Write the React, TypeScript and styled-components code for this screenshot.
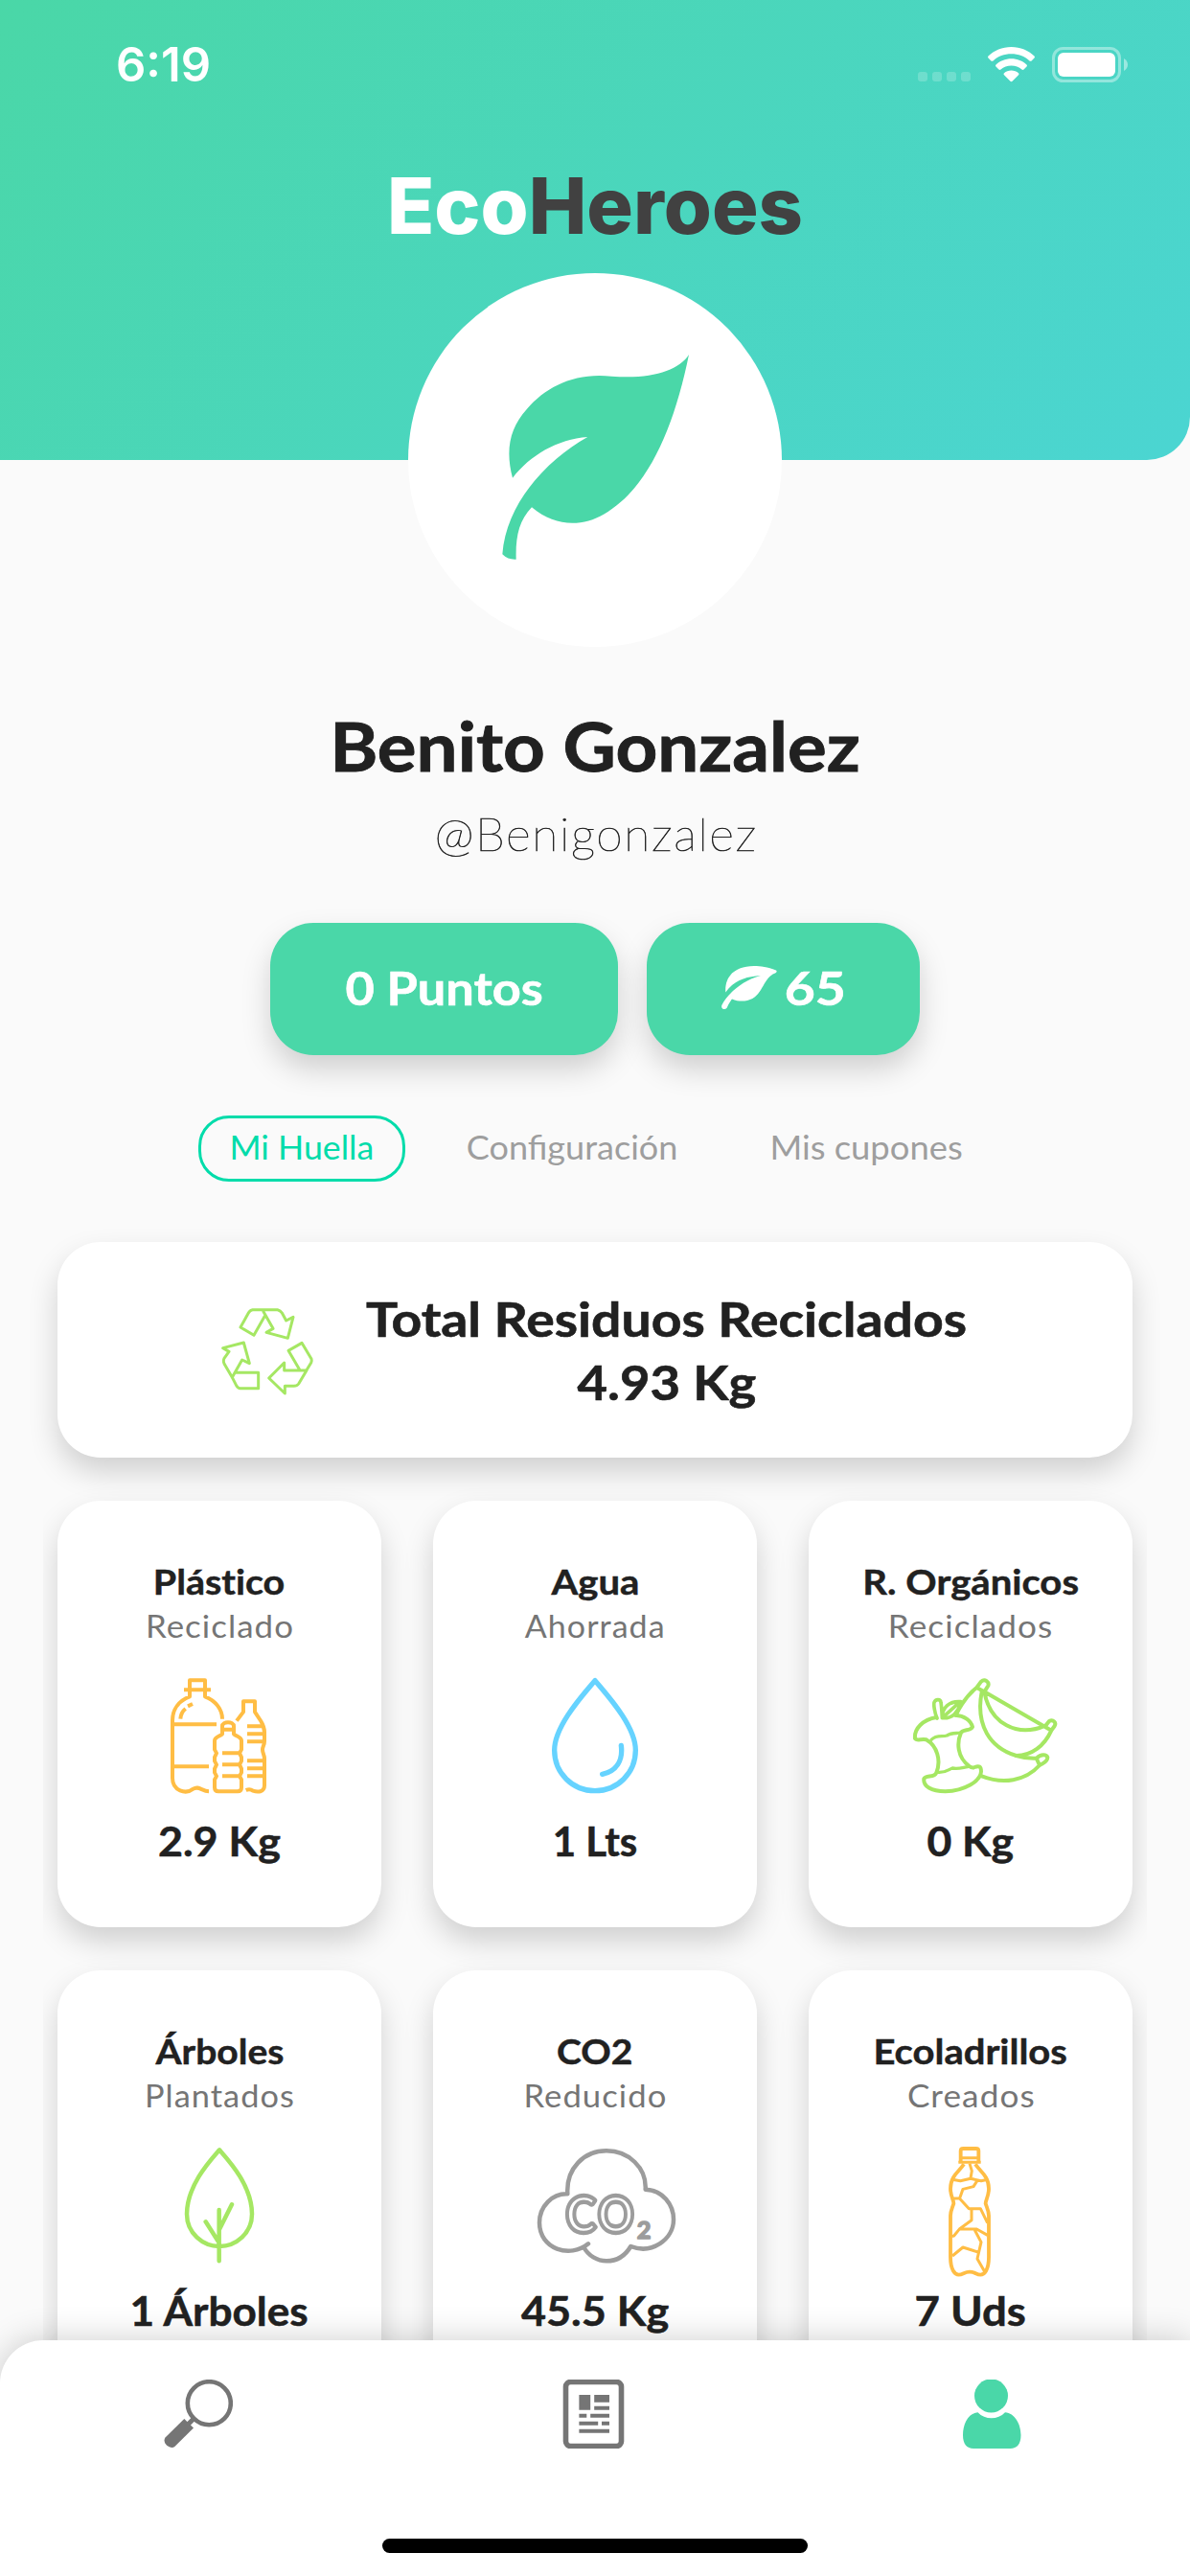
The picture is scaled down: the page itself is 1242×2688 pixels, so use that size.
import React from 'react';
import styled, { createGlobalStyle } from 'styled-components';

const GlobalStyle = createGlobalStyle`
  *, *::before, *::after { box-sizing: border-box; }
  body { margin: 0; background: #fafafa; }
`;

const color = {
  green: '#4ad7a8',
  accent: '#00dcaa',
  ink: '#212121',
  muted: '#757575',
  idle: '#9e9e9e',
  lime: '#a5e763',
  amber: '#ffbd44',
  sky: '#66d3ff',
  cloud: '#9c9c9c',
};

const Screen = styled.div`
  position: relative;
  display: flex;
  flex-direction: column;
  width: 1242px;
  height: 2688px;
  overflow: hidden;
  background: #fafafa;
  font-family: Lato, 'Liberation Sans', sans-serif;
  font-variant-ligatures: none;
  color: ${color.ink};
`;

/* $stretch widens the glyphs around the label's centre, $track spaces them. */
const Label = styled.span<{
  $size: number;
  $line: number;
  $stretch?: number;
  $track?: number;
  $weight?: number;
  $color?: string;
}>`
  display: block;
  white-space: nowrap;
  font-size: ${(p) => p.$size}px;
  line-height: ${(p) => p.$line}px;
  letter-spacing: ${(p) => p.$track ?? 0}px;
  margin-right: ${(p) => -(p.$track ?? 0)}px;
  font-weight: ${(p) => p.$weight ?? 700};
  color: ${(p) => p.$color ?? 'inherit'};
  transform: scaleX(${(p) => p.$stretch ?? 1});
  -webkit-text-stroke: ${(p) => (p.$weight ? 0 : 0.012)}em currentColor;
`;

/* Header */

const Header = styled.header`
  flex: none;
  height: 480px;
  padding-top: 38px;
  border-bottom-right-radius: 45px;
  background: linear-gradient(135deg, #4ad7a7 0%, #4bd5d2 100%);
`;

const StatusBar = styled.div`
  display: flex;
  justify-content: space-between;
  align-items: center;
  height: 60px;
  padding: 0 65px 0 121px;
  color: #fff;
`;

const Clock = styled.span`
  font: 600 49px/60px Inter, sans-serif;
`;

const StatusIcons = styled.div`
  display: flex;
  gap: 18px;
  height: 37px;
  margin-top: -2px;

  svg {
    display: block;
  }
`;

const SignalDots = styled.div`
  display: flex;
  gap: 5px;
  align-self: flex-end;
  margin-bottom: 1px;

  i {
    width: 10px;
    height: 10px;
    border-radius: 3px;
    background: rgba(255, 255, 255, 0.2);
  }
`;

const Logo = styled.h1`
  margin: 68px 0 0;
  text-align: center;
  font: 800 81px/98px Inter, sans-serif;
  color: #414141;

  span {
    color: #fff;
  }
`;

/* Profile */

const Profile = styled.section`
  flex: none;
  display: flex;
  flex-direction: column;
  align-items: center;
  margin-top: -195px;
`;

const Avatar = styled.div`
  display: grid;
  place-items: center;
  width: 390px;
  height: 390px;
  padding-bottom: 6px;
  border-radius: 50%;
  background: #fff;
`;

const Name = styled.div`
  margin-top: 61px;
`;

const Handle = styled.div`
  margin-top: 22px;

  span {
    -webkit-text-stroke: 0.6px ${color.ink};
  }
`;

const Badges = styled.div`
  display: flex;
  gap: 30px;
  margin-top: 65px;
`;

const Badge = styled.button<{ $width: number }>`
  display: flex;
  align-items: center;
  justify-content: center;
  gap: 12px;
  width: ${(p) => p.$width}px;
  height: 138px;
  padding: 0 0 3px;
  border: 0;
  border-radius: 45px;
  background: ${color.green};
  color: #fff;
  font-family: inherit;
  box-shadow: 0 15px 30px rgba(0, 0, 0, 0.17);

  svg {
    margin-left: -4px;
  }
`;

const Tabs = styled.nav`
  display: flex;
  gap: 32px;
  margin-top: 63px;
`;

const Tab = styled.button<{ $width: number; $active?: boolean }>`
  display: flex;
  align-items: center;
  justify-content: center;
  width: ${(p) => p.$width}px;
  height: 69px;
  padding: 0 0 4px;
  border: 3px solid ${(p) => (p.$active ? color.accent : 'transparent')};
  border-radius: 32px;
  background: none;
  color: ${(p) => (p.$active ? color.accent : color.idle)};
  font-family: inherit;
`;

/* Cards */

const Cards = styled.main`
  flex: none;
  display: flex;
  flex-direction: column;
  gap: 45px;
  padding: 63px 45px 0;
`;

const Surface = styled.section`
  border-radius: 45px;
  background: #fff;
  box-shadow: 0 15px 30px rgba(0, 0, 0, 0.17);
`;

const TotalCard = styled(Surface)`
  display: flex;
  align-items: center;
  justify-content: center;
  gap: 72px;
  height: 225px;
  margin: 0 15px;
  padding-right: 43px;

  svg {
    margin-top: 3px;
  }
`;

const TotalText = styled.div`
  display: flex;
  flex-direction: column;
  align-items: center;
`;

const StatGrid = styled.div`
  display: grid;
  grid-template-columns: repeat(3, 338px);
  gap: 45px 54px;
  padding: 0 15px;
  overflow-x: clip;
`;

const StatCard = styled(Surface)`
  display: flex;
  flex-direction: column;
  align-items: center;
  height: 445px;
  padding-top: 61px;
`;

const StatIcon = styled.svg`
  display: block;
  flex: none;
  width: 338px;
  height: 120px;
  margin: 32px 0 25px;
  overflow: visible;
  fill: none;
  stroke-linejoin: round;
`;

/* Bottom bar */

const BottomBar = styled.footer`
  position: absolute;
  inset: auto 0 0 0;
  display: flex;
  flex-direction: column;
  justify-content: space-between;
  align-items: center;
  height: 246px;
  padding: 41px 0 24px;
  border-top-left-radius: 45px;
  background: #fff;
  box-shadow: 0 0 36px rgba(0, 0, 0, 0.2);
`;

const BottomItems = styled.div`
  display: grid;
  grid-template-columns: repeat(3, 1fr);
  justify-items: center;
  width: 100%;
`;

const HomeIndicator = styled.div`
  width: 444px;
  height: 15px;
  border-radius: 8px;
  background: #000;
`;

/* Drawings */

const WifiIcon = () => (
  <svg width="49" height="37" viewBox="0 0 49 37" fill="#fff">
    <path d="M24.5 0C34 0 42.500 3.600 48.500 9.500c.6.600.6 1.400 0 2L45.600 14.400c-.6.600-1.500.600-2.100 0C38.500 9.700 31.800 7.200 24.500 7.200S10.500 9.700 5.500 14.400c-.6.600-1.500.600-2.100 0L.5 11.500c-.6-.6-.6-1.400 0-2C6.500 3.600 15 0 24.500 0Z" />
    <path d="M24.500 12.300c6.200 0 11.800 2.300 16 6.200.6.600.6 1.400 0 2l-3 3c-.6.600-1.400.600-2 0-3-2.600-6.800-4.100-11-4.100s-8 1.500-11 4.100c-.6.600-1.400.600-2 0l-3-3c-.6-.6-.6-1.400 0-2 4.200-3.900 9.800-6.200 16-6.200Z" />
    <path d="M24.500 24.500c2.900 0 5.500 1 7.500 2.700.6.600.6 1.400 0 2l-6.500 6.500c-.6.600-1.400.600-2 0L17 29.200c-.6-.6-.6-1.400 0-2 2-1.700 4.600-2.700 7.500-2.700Z" />
  </svg>
);

const BatteryIcon = () => (
  <svg width="79" height="37" viewBox="0 0 79 37" fill="#fff">
    <rect x="1.500" y="1.500" width="69" height="34" rx="10" fill="none" stroke="#fff" strokeOpacity=".4" strokeWidth="3" />
    <rect x="6" y="6" width="60" height="25" rx="6" />
    <path d="M75 12c2.500 1.200 4 3.700 4 6.500s-1.500 5.300-4 6.500Z" fillOpacity=".45" />
  </svg>
);

const LeafMark = () => (
  <svg width="195" height="214" viewBox="372 300 585 642" fill={color.green}>
    <path d="M957 300C925 350 840 378 715 368C600 355 510 400 450 470C395 530 382 600 405 686C460 615 545 565 640 558C520 625 385 760 373 925C385 938 400 942 416 941C414 870 425 820 465 778C540 842 625 838 690 800C830 720 910 530 957 300Z" />
  </svg>
);

const BadgeLeaf = () => (
  <svg width="58" height="46" viewBox="0 0 58 46" fill="#fff">
    <path d="M57 4.500C48 1 41 0 34 0C15 0 3 10 4.300 27.500C12 16 24 11 41 10C21 15 6 30 .3 41C-1 45.500 4.500 46.500 6 43C7.500 39.500 9 37 11 34.500C17 37 22 37 27 36C44 32 42 13 56 7.500C58 6.500 58 5 57 4.500Z" />
  </svg>
);

const RecycleIcon = () => (
  <svg width="120" height="120" viewBox="0 0 360 360" fill="none" stroke={color.lime} strokeWidth="9" strokeLinejoin="round" strokeLinecap="round">
    <path d="M131 50H209Q218 52 223 60L236 84L258 73L241 139L174 121L195 109L165 56M131 50Q123 51 118 60L93 105L135 130L169 70" />
    <path d="M67 262L42 219Q38 210 42 202L57 181L38 170L103 153L121 218L98 207L67 262M79 247H149V296H92Q85 296 81 289L66 260" />
    <path d="M182 264L230 216V240H300L275 282Q270 289 260 289H232V312ZM278 238L243 178L285 154L315 204Q317 210 314 216L298 242" />
  </svg>
);

const BottlesIcon = () => (
  <StatIcon viewBox="60 632 1014 360" stroke={color.amber} strokeWidth="12">
    <path d="M576 760C576 730 555 703 522 690V638.500H474V690C440 703 420 730 420 765V945C420 986 462 997 485 979C502 968 512 986 534 987" />
    <path d="M456 669H540M420 777H558M420 909H534M445 760C446 745 452 735 461 728M468 720L483 713" />
    <path d="M576 807V783C576 767 612 767 612 783V807C618 814 636 816 636 828V856L630 867L636 880V892L630 903L636 916V928L630 939L636 950V975C636 983 632 987 624 987H564C556 987 552 983 552 975V950L558 939L552 928V916L558 903L552 892V880L558 867L552 856V828C552 816 570 814 576 807ZM580 793H608" />
    <path d="M576 867H634M576 903H634M576 939H634" />
    <path d="M621 766L642 738V705H678V738L697 767C705 780 708 788 708 802V830C708 842 702 846 702 856C702 868 708 872 708 885V968C708 990 686 990 672 985C662 977 655 981 650 983" />
    <path d="M654 783H706M654 807H708M654 831H706M654 891H708M654 915H708M654 939H708" />
  </StatIcon>
);

const DropIcon = () => (
  <StatIcon viewBox="66 632 1014 360" stroke={color.sky} strokeWidth="16" strokeLinecap="round">
    <path d="M573 640C540 680 446 780 446 858C446 930 503 985 573 985C643 985 700 930 700 858C700 780 606 680 573 640ZM655 843C661 890 640 923 596 933" />
  </StatIcon>
);

const OrganicIcon = () => (
  <StatIcon viewBox="72 632 1014 360" stroke={color.lime} strokeWidth="12" strokeLinecap="round">
    <path d="M472 755C430 762 402 790 405 821C410 830 424 822 440 825C475 845 487 890 472 928C465 945 440 935 433 947C430 970 455 987 500 987C560 985 610 955 612 925C612 908 605 906 592 911C585 914 580 912 575 908C537 880 535 835 549 803C555 792 580 798 585 785C580 765 560 750 530 748" />
    <path d="M456 825C473 808 490 817 505 812C520 802 535 806 548 803M475 927C500 930 510 918 522 914C540 918 555 912 570 910" strokeWidth="10" />
    <path d="M474 758C466 740 463 715 465 708C470 696 485 698 486 708C488 720 489 735 490 757C490 722 515 703 548 706C542 740 520 760 490 757L540 712" strokeWidth="11" />
    <path d="M598 662L612 643C624 632 638 645 634 656L622 675ZM598 662C575 680 555 702 533 748" />
    <path d="M622 675C640 775 725 820 815 780L825 767C838 760 848 772 842 782L832 796ZM832 796C810 845 770 875 722 875" />
    <path d="M614 675C594 780 640 850 722 875C745 882 765 884 785 883C800 869 816 870 820 880C820 896 805 898 795 905L785 883M795 905C750 955 680 965 614 939" />
  </StatIcon>
);

const TreeIcon = () => (
  <StatIcon viewBox="60 602 1014 360" stroke={color.lime} strokeWidth="13.500" strokeLinecap="round">
    <path d="M567 609C540 640 465 720 465 810C465 870 515 911 567 911C619 911 669 870 669 810C669 720 594 640 567 609ZM566 797V957M606 780L567 858M524 834L565 898" />
  </StatIcon>
);

const CloudIcon = () => (
  <StatIcon viewBox="66 602 1014 360" stroke={color.cloud} strokeWidth="13.500" strokeLinecap="round">
    <path d="M552 903C495 950 399 920 399 837C399 785 440 745 487 747C482 665 540 612 609 612C678 612 735 665 731 733C785 735 819 780 819 827C819 890 750 937 685 911C668 940 640 957 609 957C580 957 552 940 538 914" />
    <g fontFamily="Lato, sans-serif" fontWeight="900">
      <text x="481" y="868" fontSize="158" strokeWidth="13" textLength="96" lengthAdjust="spacingAndGlyphs">C</text>
      <text x="581" y="868" fontSize="158" strokeWidth="13" textLength="114" lengthAdjust="spacingAndGlyphs">O</text>
      <text x="704" y="887" fontSize="76" fontWeight="700" strokeWidth="5" fill={color.cloud}>2</text>
    </g>
  </StatIcon>
);

const EcobrickIcon = () => (
  <StatIcon viewBox="72 602 1014 360" stroke={color.amber} strokeWidth="11.500">
    <path d="M548 648V612C548 607 550 605 556 605H596C602 605 604 607 604 612V648" />
    <path d="M541 648H611M548 634H604" strokeWidth="9" />
    <path d="M558 654C545 675 516 690 516 730C516 755 526 765 526 777C522 790 516 800 516 815V945C516 985 530 1000 542 1000C555 1000 560 991 576 991C592 991 597 1000 610 1000C622 1000 636 985 636 945V815C636 800 630 790 626 777C626 765 636 755 636 730C636 690 607 675 594 654" />
    <path
      strokeWidth="9"
      d="M576 652L583 675L579 698M522 702L547 706L579 699L612 706L632 702M600 705L588 724L555 732L545 760L522 762M545 762L574 793H610L632 838M582 793V829L545 856L527 878L520 880M545 857H598L632 876M592 860L612 898L600 950L624 992M522 941L555 914L602 929"
    />
  </StatIcon>
);

const SearchIcon = () => (
  <svg width="72" height="72" viewBox="0 0 72 72">
    <circle cx="47.300" cy="24.700" r="22.500" fill="none" stroke={color.muted} strokeWidth="4.600" />
    <path d="M24 48L32 40" stroke={color.muted} strokeWidth="5" />
    <path d="M21.300 41L31 50.500L11.300 70C7 73.500 -2.500 66.500 1.500 60.500Z" fill={color.muted} />
  </svg>
);

const NewsIcon = () => (
  <svg width="72" height="72" viewBox="0 0 72 72" fill={color.muted}>
    <rect x="5.500" y="2.500" width="58" height="67" rx="5" fill="none" stroke={color.muted} strokeWidth="5.600" />
    <path d="M19.400 16H31.200V31.700H19.400ZM35.200 16H51V23.800H35.200ZM35.200 27.700H51V31.700H35.200ZM19.400 35.700H27.300V39.700H19.400ZM31.200 35.700H51V39.700H31.200ZM19.400 43.700H39.200V47.700H19.400ZM43 43.700H51V47.700H43ZM19.400 51.700H51V55.700H19.400Z" />
  </svg>
);

const PersonIcon = () => (
  <svg width="72" height="72" viewBox="0 0 72 72" fill={color.green}>
    <circle cx="35.500" cy="17" r="17.500" />
    <path d="M21.500 34.200C29 42.300 42.500 42.300 50 34.200C60 35 66.500 46 66.500 58C66.500 67 62.500 72 55.500 72H17C10 72 6 67 6 58C6 46 11.500 35 21.500 34.200Z" />
  </svg>
);

/* Data */

type Text = [value: string, stretch: number];

const stats: { title: Text; note: Text; value: Text; Icon: React.FC }[] = [
  { title: ['Plástico', 1.065], note: ['Reciclado', 1.056], value: ['2.9 Kg', 1.067], Icon: BottlesIcon },
  { title: ['Agua', 1.083], note: ['Ahorrada', 1.03], value: ['1 Lts', 1], Icon: DropIcon },
  { title: ['R. Orgánicos', 1.083], note: ['Reciclados', 1.064], value: ['0 Kg', 1.06], Icon: OrganicIcon },
  { title: ['Árboles', 1.055], note: ['Plantados', 1.04], value: ['1 Árboles', 1.05], Icon: TreeIcon },
  { title: ['CO2', 1.055], note: ['Reducido', 1.05], value: ['45.5 Kg', 1.07], Icon: CloudIcon },
  { title: ['Ecoladrillos', 1.081], note: ['Creados', 1.065], value: ['7 Uds', 1.085], Icon: EcobrickIcon },
];

const tabs = [
  { text: 'Mi Huella', stretch: 1.05, width: 216 },
  { text: 'Configuración', stretch: 1.06, width: 286 },
  { text: 'Mis cupones', stretch: 1.07, width: 263 },
];

export default function App() {
  return (
    <Screen>
      <GlobalStyle />
      <Header>
        <StatusBar>
          <Clock>6:19</Clock>
          <StatusIcons>
            <SignalDots>
              <i />
              <i />
              <i />
              <i />
            </SignalDots>
            <WifiIcon />
            <BatteryIcon />
          </StatusIcons>
        </StatusBar>
        <Logo>
          <span>Eco</span>Heroes
        </Logo>
      </Header>

      <Profile>
        <Avatar>
          <LeafMark />
        </Avatar>
        <Name>
          <Label $size={70} $line={84} $stretch={1.09}>Benito Gonzalez</Label>
        </Name>
        <Handle>
          <Label $size={47} $line={56} $stretch={1.06} $track={1.5} $weight={100}>@Benigonzalez</Label>
        </Handle>
        <Badges>
          <Badge $width={363}>
            <Label $size={48} $line={58} $stretch={1.09}>0 Puntos</Label>
          </Badge>
          <Badge $width={285}>
            <BadgeLeaf />
            <Label $size={48} $line={58} $stretch={1.15}>65</Label>
          </Badge>
        </Badges>
        <Tabs>
          {tabs.map(({ text, stretch, width }, i) => (
            <Tab key={text} $width={width} $active={i === 0}>
              <Label $size={34} $line={42} $stretch={stretch} $weight={400}>{text}</Label>
            </Tab>
          ))}
        </Tabs>
      </Profile>

      <Cards>
        <TotalCard>
          <RecycleIcon />
          <TotalText>
            <Label $size={50} $line={66} $stretch={1.106}>Total Residuos Reciclados</Label>
            <Label $size={50} $line={66} $stretch={1.088}>4.93 Kg</Label>
          </TotalText>
        </TotalCard>
        <StatGrid>
          {stats.map(({ title, note, value, Icon }) => (
            <StatCard key={title[0]}>
              <Label $size={37} $line={46} $stretch={title[1]}>{title[0]}</Label>
              <Label $size={33} $line={46} $stretch={note[1]} $track={1} $weight={400} $color={color.muted}>{note[0]}</Label>
              <Icon />
              <Label $size={42} $line={50} $stretch={value[1]}>{value[0]}</Label>
            </StatCard>
          ))}
        </StatGrid>
      </Cards>

      <BottomBar>
        <BottomItems>
          <SearchIcon />
          <NewsIcon />
          <PersonIcon />
        </BottomItems>
        <HomeIndicator />
      </BottomBar>
    </Screen>
  );
}
